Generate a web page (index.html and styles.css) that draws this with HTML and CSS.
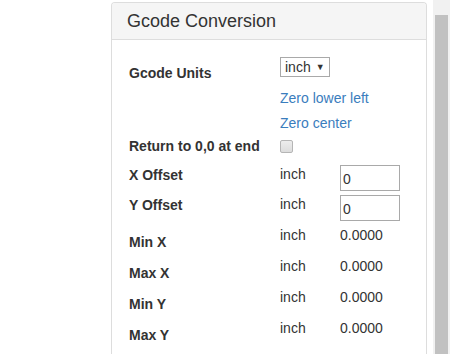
FILE: index.html
```html
<!DOCTYPE html>
<html lang="en">
<head>
  <meta charset="UTF-8">
  <title>Gcode Conversion</title>
  <link rel="stylesheet" href="styles.css">
</head>
<body>
  <div class="page">
    <div class="panel">
      <div class="panel-heading">Gcode Conversion</div>
      <div class="panel-body">
        <div class="row row-units">
          <div class="label">Gcode Units</div>
          <div class="wide">
            <div class="select">inch <span class="caret">&#9660;</span></div>
            <a href="#" class="link first">Zero lower left</a>
            <a href="#" class="link">Zero center</a>
          </div>
        </div>
        <div class="row row-check">
          <div class="label">Return to 0,0 at end</div>
          <div class="wide"><input type="checkbox" class="check"></div>
        </div>
        <div class="row row-input">
          <div class="label">X Offset</div>
          <div class="unit">inch</div>
          <div><input type="text" class="num" value="0"></div>
        </div>
        <div class="row row-input">
          <div class="label">Y Offset</div>
          <div class="unit">inch</div>
          <div><input type="text" class="num" value="0"></div>
        </div>
        <div class="row row-value">
          <div class="label">Min X</div>
          <div class="unit">inch</div>
          <div class="value">0.0000</div>
        </div>
        <div class="row row-value">
          <div class="label">Max X</div>
          <div class="unit">inch</div>
          <div class="value">0.0000</div>
        </div>
        <div class="row row-value">
          <div class="label">Min Y</div>
          <div class="unit">inch</div>
          <div class="value">0.0000</div>
        </div>
        <div class="row row-value">
          <div class="label">Max Y</div>
          <div class="unit">inch</div>
          <div class="value">0.0000</div>
        </div>
      </div>
    </div>
    <div class="scrollbar"><div class="thumb"></div></div>
  </div>
</body>
</html>
```

FILE: styles.css
```css
* {
  margin: 0;
  padding: 0;
  box-sizing: border-box;
}

body {
  font-family: 'Liberation Sans', Arial, sans-serif;
  font-size: 14px;
  line-height: 20px;
  color: #333;
  background: #fff;
  height: 354px;
  overflow: hidden;
}

.page {
  display: flex;
  height: 354px;
  overflow: hidden;
  padding-left: 111px;
  padding-top: 2px;
}

.panel {
  width: 316px;
  height: 352px;
  border: 1px solid #ddd;
  border-bottom: none;
  border-radius: 4px 4px 0 0;
  background: #fff;
}

.panel-heading {
  background: #f5f5f5;
  border-bottom: 1px solid #ddd;
  border-radius: 3px 3px 0 0;
  padding: 8px 15px;
  font-size: 18px;
  line-height: 20px;
  height: 37px;
}

.panel-body {
  padding: 17px 17px 0;
}

.row {
  display: grid;
  grid-template-columns: 151px 60px 1fr;
  align-items: start;
}

.label {
  font-weight: bold;
}

.wide {
  grid-column: 2 / span 2;
}

/* units row */
.row-units .label {
  padding-top: 6px;
}

.select {
  display: inline-flex;
  align-items: center;
  width: 50px;
  height: 20px;
  border: 1px solid #a9a9a9;
  padding-left: 4px;
  line-height: 18px;
}

.caret {
  font-size: 9px;
  margin-left: 5px;
}

.link {
  display: block;
  color: #3a7dbd;
  text-decoration: none;
  margin-top: 5px;
}

.link.first {
  margin-top: 11px;
}

/* checkbox row */
.row-check {
  margin-top: 3px;
}

.check {
  appearance: none;
  display: block;
  width: 13px;
  height: 13px;
  margin-top: 4px;
  border: 1px solid #b5b5b5;
  border-radius: 2px;
  background: linear-gradient(#ededed, #dcdcdc);
}

/* offset rows */
.row-input {
  margin-top: 9px;
  height: 26px;
}

.row-input + .row-input {
  margin-top: 4px;
}

.row-input .unit {
  margin-top: -1px;
}

.num {
  display: block;
  width: 60px;
  height: 26px;
  border: 1px solid #a9a9a9;
  padding: 2px 2px 0;
  font-family: 'Liberation Sans', Arial, sans-serif;
  font-size: 14px;
  color: #333;
  outline: none;
}

/* result rows */
.row-value {
  height: 31px;
}

.row-input + .row-value {
  margin-top: 4px;
}

.row-value .label {
  padding-top: 7px;
}

.scrollbar {
  margin-left: 6px;
  margin-top: -2px;
  width: 17px;
  height: 354px;
  flex-shrink: 0;
  background: #f1f1f1;
  padding: 15px 2px 0 2px;
}

.thumb {
  height: 100%;
  background: #c1c1c1;
}
```
